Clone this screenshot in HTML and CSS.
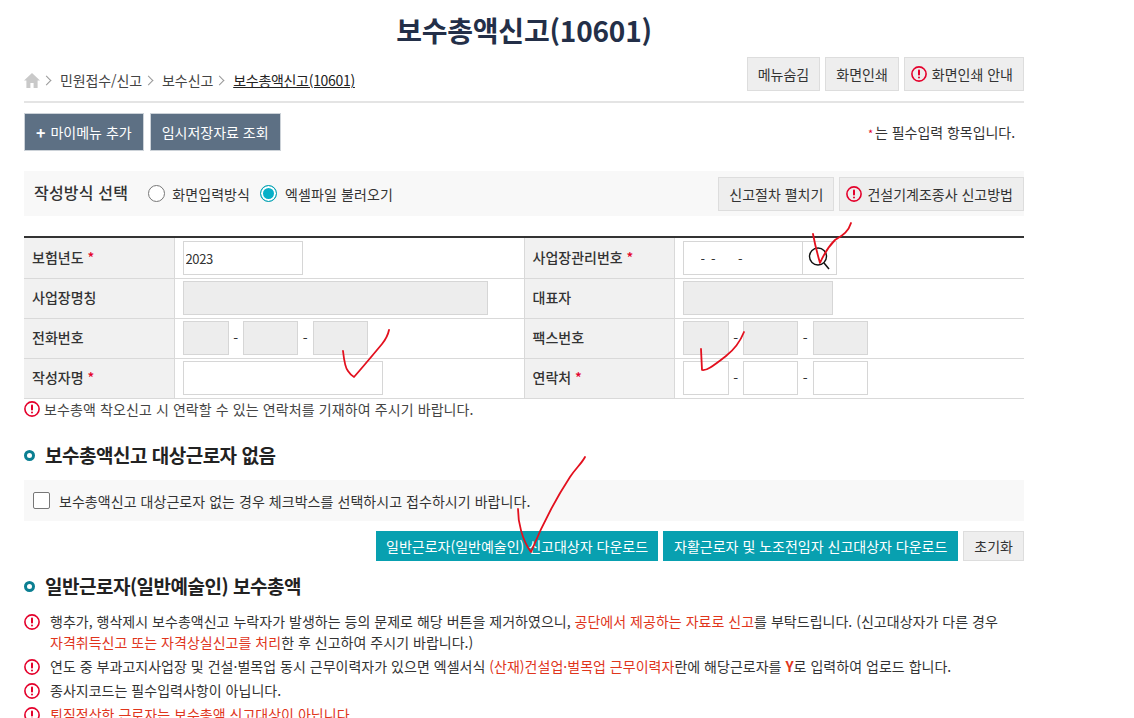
FILE: index.html
```html
<!DOCTYPE html>
<html lang="ko">
<head>
    <meta charset="UTF-8">
    <title>보수총액신고(10601)</title>
    <link rel="stylesheet" href="styles.css">
</head>
<body>
    <svg width="0" height="0" class="defs">
        <symbol id="alert" viewBox="0 0 16 16">
            <circle cx="8" cy="8" r="7.1" fill="none" stroke="#e4002b" stroke-width="1.6"/>
            <rect x="7" y="3.4" width="2" height="6" rx="0.9" fill="#e4002b"/>
            <rect x="7" y="10.6" width="2" height="2" rx="1" fill="#e4002b"/>
        </symbol>
    </svg>
    <div class="wrap">
        <h1 class="title">보수총액신고(10601)</h1>
        <div class="topbar">
            <div class="crumbs">
                <svg class="home" width="16" height="16" viewBox="0 0 16 16"><path d="M8 1 L16 8.5 H13.6 V16 H9.6 V11 H6.4 V16 H2.4 V8.5 H0 Z" fill="#c9c9c9"/></svg>
                <i class="chev"></i><span>민원접수/신고</span>
                <i class="chev"></i><span>보수신고</span>
                <i class="chev"></i><span class="current">보수총액신고(10601)</span>
            </div>
            <div class="btns">
                <button class="btn">메뉴숨김</button>
                <button class="btn">화면인쇄</button>
                <button class="btn has-ico"><svg class="ico"><use href="#alert"/></svg>화면인쇄 안내</button>
            </div>
        </div>
        <div class="actions">
            <div class="btns wide">
                <button class="btn dark"><b class="plus">+</b>마이메뉴 추가</button>
                <button class="btn dark">임시저장자료 조회</button>
            </div>
            <p class="required"><span class="star small">*</span>는 필수입력 항목입니다.</p>
        </div>
        <div class="method">
            <strong>작성방식 선택</strong>
            <label class="radio"><i class="dot"></i>화면입력방식</label>
            <label class="radio"><i class="dot on"></i>엑셀파일 불러오기</label>
            <div class="btns right">
                <button class="btn">신고절차 펼치기</button>
                <button class="btn has-ico"><svg class="ico"><use href="#alert"/></svg>건설기계조종사 신고방법</button>
            </div>
        </div>
        <table class="form">
            <colgroup><col class="c-th"><col class="c-td"><col class="c-th"><col class="c-td"></colgroup>
            <tr>
                <th>보험년도 <span class="star">*</span></th>
                <td><input class="inp w120" value="2023"></td>
                <th>사업장관리번호 <span class="star">*</span></th>
                <td><div class="lookup"><input class="inp w120 dashes" value="- &nbsp;- &nbsp; &nbsp; &nbsp; -"><span class="search"><svg width="33" height="34" viewBox="0 0 33 34"><circle cx="15" cy="15.5" r="8.5" fill="none" stroke="#111" stroke-width="1.4"/><path d="M21 22 L26 28" stroke="#111" stroke-width="1.5"/></svg></span></div></td>
            </tr>
            <tr>
                <th>사업장명칭</th>
                <td><input class="inp off w305"></td>
                <th>대표자</th>
                <td><input class="inp off w150"></td>
            </tr>
            <tr>
                <th>전화번호</th>
                <td class="phone"><input class="inp off w46"><em>-</em><input class="inp off w55"><em>-</em><input class="inp off w55"></td>
                <th>팩스번호</th>
                <td class="phone"><input class="inp off w46"><em>-</em><input class="inp off w55"><em>-</em><input class="inp off w55"></td>
            </tr>
            <tr>
                <th>작성자명 <span class="star">*</span></th>
                <td><input class="inp w200"></td>
                <th>연락처 <span class="star">*</span></th>
                <td class="phone"><input class="inp w46"><em>-</em><input class="inp w55"><em>-</em><input class="inp w55"></td>
            </tr>
        </table>
        <p class="tablenote"><svg class="ico"><use href="#alert"/></svg>보수총액 착오신고 시 연락할 수 있는 연락처를 기재하여 주시기 바랍니다.</p>
        <h2 class="sect sect-first">보수총액신고 대상근로자 없음</h2>
        <label class="checkbar"><i class="box"></i>보수총액신고 대상근로자 없는 경우 체크박스를 선택하시고 접수하시기 바랍니다.</label>
        <div class="btns downloads">
            <button class="btn teal">일반근로자(일반예술인) 신고대상자 다운로드</button>
            <button class="btn teal">자활근로자 및 노조전임자 신고대상자 다운로드</button>
            <button class="btn">초기화</button>
        </div>
        <h2 class="sect">일반근로자(일반예술인) 보수총액</h2>
        <ul class="notes">
            <li><svg class="ico"><use href="#alert"/></svg><div>행추가, 행삭제시 보수총액신고 누락자가 발생하는 등의 문제로 해당 버튼을 제거하였으니, <span class="red">공단에서 제공하는 자료로 신고</span>를 부탁드립니다. (신고대상자가 다른 경우<br><span class="red">자격취득신고 또는 자격상실신고를 처리</span>한 후 신고하여 주시기 바랍니다.)</div></li>
            <li><svg class="ico"><use href="#alert"/></svg><div>연도 중 부과고지사업장 및 건설·벌목업 동시 근무이력자가 있으면 엑셀서식 <span class="red">(산재)건설업·벌목업 근무이력자</span>란에 해당근로자를 <b class="red">Y</b>로 입력하여 업로드 합니다.</div></li>
            <li><svg class="ico"><use href="#alert"/></svg><div>종사지코드는 필수입력사항이 아닙니다.</div></li>
            <li><svg class="ico"><use href="#alert"/></svg><div class="red">퇴직정산한 근로자는 보수총액 신고대상이 아닙니다</div></li>
        </ul>
    </div>
    <!-- 빨간 펜 체크 표시 -->
    <svg class="marks" width="1134" height="718" viewBox="0 0 1134 718">
        <g fill="none" stroke="#e3101e" stroke-width="1.8" stroke-linecap="round" stroke-linejoin="round">
            <path d="M813 234 C815 245 818 256 820 263 C824 254 829 246 835 240 C841 236 848 233 851 223"/>
            <path d="M343 351 C344 360 345 368 348 371 C350 374 352 376 354 377 C362 368 372 356 382 344 C386 339 388 335 389 330"/>
            <path d="M701 349 L702 370 C706 371 712 367 726 356 C735 349 740 342 744 332"/>
            <path d="M518 509 C518 522 522 540 531 552 C540 530 555 500 570 477 C576 468 582 463 585 457"/>
        </g>
    </svg>
</body>
</html>
```

FILE: styles.css
```css
html, body {
    margin: 0;
    padding: 0;
    height: 718px;
    overflow: hidden;
    background: #fff;
}
body {
    font-family: "Noto Sans CJK KR", "Noto Sans", sans-serif;
    font-size: 14px;
    color: #333;
    position: relative;
}
.defs {
    position: absolute;
}
.wrap {
    width: 1000px;
    margin-left: 24px;
}
.title {
    margin: 0;
    height: 57px;
    line-height: 60px;
    text-align: center;
    font-size: 28px;
    font-weight: 700;
    color: #232f48;
    letter-spacing: -0.2px;
}
.topbar {
    display: flex;
    justify-content: space-between;
    height: 44px;
    border-bottom: 2px solid #e4e4e4;
}
.crumbs {
    display: flex;
    align-items: center;
    height: 46px;
    letter-spacing: -0.1px;
    color: #444;
}
.crumbs .current {
    color: #222;
    letter-spacing: -0.3px;
    text-decoration: underline;
}
.chev {
    width: 6px;
    height: 6px;
    margin: 0 10px 0 3px;
    border-top: 1px solid #999;
    border-right: 1px solid #999;
    transform: rotate(45deg);
}
.btns {
    display: flex;
    gap: 5px;
}
.btns.wide {
    gap: 6px;
}
.btn {
    height: 34px;
    padding: 0 10px;
    border: 1px solid #ddd;
    background: #eee;
    font: inherit;
    color: #333;
    display: flex;
    align-items: center;
}
.btn.has-ico {
    padding-left: 6px;
}
.btn.dark {
    height: 38px;
    background: #5d7084;
    border-color: #ccd2d8;
    color: #fff;
    padding: 0 11px;
}
.plus {
    font-size: 16px;
    margin-right: 5px;
    line-height: 1;
}
.btn.teal {
    height: 30px;
    background: #08a0b0;
    border: 0;
    color: #fff;
    padding: 0 10px;
}
.btn.teal + .btn.teal {
    padding: 0 11px;
}
.ico {
    width: 16px;
    height: 16px;
    margin-right: 5px;
    flex: none;
}
.actions {
    display: flex;
    justify-content: space-between;
    align-items: center;
    padding-top: 10px;
    height: 38px;
}
.required {
    margin: 0 9px 0 0;
    letter-spacing: -0.05px;
}
.star {
    color: #e4002b;
}
.star.small {
    font-size: 11px;
    margin-right: 2px;
}
.method {
    display: flex;
    align-items: center;
    height: 45px;
    margin-top: 20px;
    padding: 0 0 0 10px;
    background: #f8f8f8;
}
.method strong {
    font-size: 16px;
    font-weight: 500;
    letter-spacing: 0.2px;
    margin: -4px 20px 0 0;
}
.radio {
    display: flex;
    align-items: center;
    margin-right: 10px;
    letter-spacing: 0.1px;
}
.dot {
    width: 15px;
    height: 15px;
    margin-right: 7px;
    border: 1px solid #777;
    border-radius: 50%;
    box-sizing: content-box;
    background: #fff;
}
.dot.on {
    margin-right: 8px;
    border-color: #08a0b0;
    background: #08b0c8;
    box-shadow: inset 0 0 0 2px #fff;
}
.right {
    margin-left: auto;
}
.form {
    width: 1000px;
    margin-top: 20px;
    border-collapse: collapse;
    table-layout: fixed;
    border-top: 2px solid #333;
}
.c-th {
    width: 150px;
}
.c-td {
    width: 350px;
}
.form th, .form td {
    height: 38px;
    padding: 0 0 1px 8px;
    border-bottom: 1px solid #d9d9d9;
    border-left: 1px solid #d9d9d9;
    box-sizing: content-box;
    vertical-align: middle;
}
.form tr:first-child th, .form tr:first-child td {
    height: 39px;
}
.form tr > :first-child {
    border-left: 0;
}
.form th {
    background: #f1f1f1;
    text-align: left;
    font-weight: 500;
    padding-bottom: 3px;
    height: 36px;
}
.form tr:first-child th {
    height: 37px;
}
.inp {
    display: inline-block;
    box-sizing: border-box;
    height: 34px;
    padding: 2px 2px 0;
    border: 1px solid #d6d6d6;
    background: #fff;
    font: inherit;
    font-size: 13px;
    letter-spacing: -0.4px;
    color: #333;
    vertical-align: middle;
}
.inp.off {
    background: #ededed;
}
.w46 { width: 46px; }
.w55 { width: 55px; }
.w120 { width: 120px; }
.w150 { width: 150px; }
.w200 { width: 200px; }
.w305 { width: 305px; }
.phone em {
    display: inline-block;
    width: 14.5px;
    text-align: center;
    font-style: normal;
    vertical-align: middle;
}
.lookup {
    display: flex;
}
.dashes {
    padding-left: 17px;
}
.search {
    width: 33px;
    height: 32px;
    border: 1px solid #d6d6d6;
    border-left: 0;
    display: flex;
    align-items: center;
    justify-content: center;
}
.tablenote {
    display: flex;
    align-items: center;
    margin: 0;
    height: 20px;
    letter-spacing: 0.1px;
    color: #444;
}
.tablenote .ico {
    margin-right: 4px;
}
.sect {
    position: relative;
    margin: 0;
    padding-left: 21px;
    font-size: 19px;
    font-weight: 700;
    color: #222;
    letter-spacing: -0.5px;
    line-height: 26px;
    margin-top: 12px;
}
.sect-first {
    margin-top: 23px;
}
.sect::before {
    content: "";
    position: absolute;
    left: 0;
    top: 8px;
    width: 5px;
    height: 5px;
    border: 3px solid #0b7f92;
    border-radius: 50%;
}
.checkbar {
    display: flex;
    align-items: center;
    height: 41px;
    margin-top: 12px;
    padding-left: 9px;
    background: #f8f8f8;
    letter-spacing: 0.05px;
}
.box {
    width: 15px;
    height: 15px;
    margin-right: 9px;
    border: 1px solid #777;
    border-radius: 2px;
    background: #fff;
}
.downloads {
    justify-content: flex-end;
    margin-top: 10px;
}
.downloads .btn {
    height: 30px;
}
.notes {
    list-style: none;
    margin: 12px 0 0;
    padding: 0;
    letter-spacing: 0.02px;
    color: #333;
}
.notes li {
    display: flex;
    margin-bottom: 3px;
    line-height: 21px;
}
.notes .ico {
    margin: 3px 10px 0 0;
}
.red {
    color: #e0351c;
}
.marks {
    position: absolute;
    left: 0;
    top: 0;
    pointer-events: none;
}
```
